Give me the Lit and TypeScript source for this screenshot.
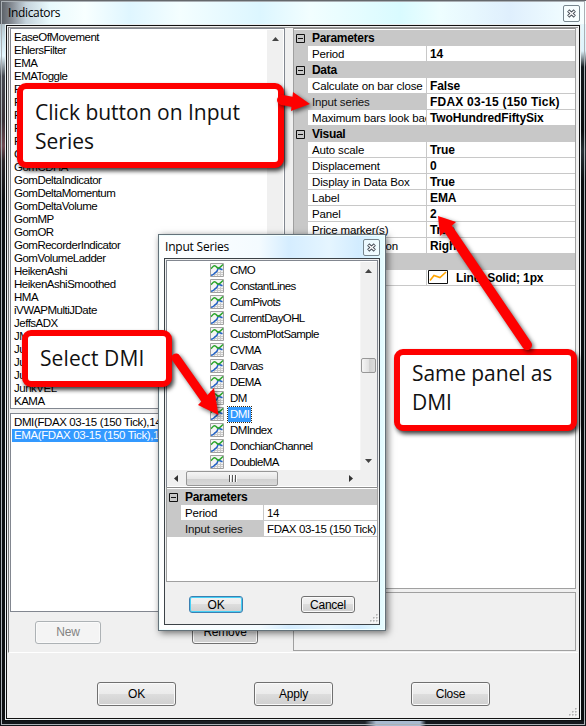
import { LitElement, html, css, svg } from "lit";
import { customElement } from "lit/decorators.js";
import { classMap } from "lit/directives/class-map.js";

const indicators = [
  "EaseOfMovement", "EhlersFilter", "EMA", "EMAToggle", "F", "F", "F", "F", "F", "G",
  "GomCDHA", "GomDeltaIndicator", "GomDeltaMomentum", "GomDeltaVolume", "GomMP", "GomOR",
  "GomRecorderIndicator", "GomVolumeLadder", "HeikenAshi", "HeikenAshiSmoothed", "HMA",
  "iVWAPMultiJDate", "JeffsADX", "JM", "Ju", "Ju", "Ju", "JunkVEL", "KAMA",
];

const studies = [
  "CMO", "ConstantLines", "CumPivots", "CurrentDayOHL", "CustomPlotSample", "CVMA", "Darvas",
  "DEMA", "DM", "DMI", "DMIndex", "DonchianChannel", "DoubleMA",
];

type Row = { head?: string; name?: string; value?: string; active?: boolean; plot?: boolean };

const settings: Row[] = [
  { head: "Parameters" },
  { name: "Period", value: "14" },
  { head: "Data" },
  { name: "Calculate on bar close", value: "False" },
  { name: "Input series", value: "FDAX 03-15 (150 Tick)", active: true },
  { name: "Maximum bars look back", value: "TwoHundredFiftySix" },
  { head: "Visual" },
  { name: "Auto scale", value: "True" },
  { name: "Displacement", value: "0" },
  { name: "Display in Data Box", value: "True" },
  { name: "Label", value: "EMA" },
  { name: "Panel", value: "2" },
  { name: "Price marker(s)", value: "True" },
  { name: "Scale justification", value: "Right" },
  { head: "Plots" },
  { name: "EMA", value: "Line; Solid; 1px", plot: true },
];

const seriesSettings: Row[] = [
  { head: "Parameters" },
  { name: "Period", value: "14" },
  { name: "Input series", value: "FDAX 03-15 (150 Tick)", active: true },
];

const shared = css`
  * { box-sizing: border-box; }
  .btn {
    display: flex; align-items: center; justify-content: center;
    border: 1px solid #707070; border-radius: 3px;
    box-shadow: inset 0 0 0 1px #fafafa;
    background: linear-gradient(#f2f2f2 0, #ebebeb 49%, #dddddd 50%, #cfcfcf 100%);
    font-size: 12px; letter-spacing: -0.25px; padding-bottom: 1px; color: #000;
  }
  .btn.off { border-color: #adb2b5; background: #f4f4f4; color: #838383; }
  .btn.focus { border-color: #3c7fb1; box-shadow: inset 0 0 0 1px #46d0f5; }
  .close {
    display: flex; align-items: center; justify-content: center;
    width: 17px; height: 17px; border: 1px solid #77868e; border-radius: 2px;
    background: rgba(250, 255, 255, 0.6);
  }
  svg { display: block; }
`;

const closeIcon = svg`<svg width="9" height="9" viewBox="0 0 9 9"><path d="M1.2 1.5 7.8 7.5M7.8 1.5 1.2 7.5" stroke="#444b55" stroke-width="3.2"/><path d="M1.6 1.9 7.4 7.1M7.4 1.9 1.6 7.1" stroke="#fff" stroke-width="1.3"/></svg>`;

const grip = html`<svg width="10" height="10" viewBox="0 0 10 10">
  ${[[7, 1], [4, 4], [7, 4], [1, 7], [4, 7], [7, 7]].map(
    ([x, y]) => svg`<rect x=${x + 1} y=${y + 1} width="1.5" height="1.5" fill="#fff"/><rect x=${x} y=${y} width="1.6" height="1.6" fill="#b4b4b4"/>`
  )}
</svg>`;

@customElement("property-grid")
class PropertyGrid extends LitElement {
  static properties = { rows: { attribute: false }, compact: { type: Boolean, reflect: true } };
  declare rows: Row[];
  declare compact: boolean;

  static styles = [shared, css`
    :host { display: block; box-sizing: border-box; background: #fff; border: 1px solid #a0a0a0; padding-top: 1px; border-top-color: #8c8c8c; overflow: hidden; --name: 118px; --gutter: 14px; }
    :host([compact]) { --name: 82px; }
    .row { display: grid; grid-template-columns: var(--gutter) var(--name) 1fr; height: 16px; font-size: 11.5px; line-height: 17px; white-space: nowrap; }
    .gutter { background: #c8c8c8; }
    .head { display: flex; align-items: center; height: 16px; background: #c8c8c8; font: bold 12px/16px "Liberation Sans", sans-serif; letter-spacing: -0.3px; }
    .head svg { margin: 0 7px 0 2px; }
    .name { border-bottom: 1px solid #c8c8c8; padding-left: 4px; overflow: hidden; letter-spacing: -0.15px; }
    .value { border-left: 1px solid #c8c8c8; border-bottom: 1px solid #c8c8c8; padding-left: 3px; font-size: 12px; font-weight: bold; letter-spacing: -0.12px; overflow: hidden; display: flex; }
    .active .value { letter-spacing: 0.22px; }
    :host([compact]) .value { font-size: 11.5px; font-weight: normal; letter-spacing: -0.38px; }
    .active .name { background: #c8c8c8; color: #111; }
    .plot .value { padding-left: 1px; gap: 8px; }
  `];

  render() {
    return this.rows.map((r) => r.head
      ? html`<div class="head">
          <svg width="9" height="9" viewBox="0 0 9 9"><path d="M.5.5h8v8h-8zM2 4.5h5" fill="none" stroke="#111"/></svg>${r.head}
        </div>`
      : html`<div class=${classMap({ row: true, active: !!r.active, plot: !!r.plot })}>
          <div class="gutter"></div>
          <div class="name">${r.name}</div>
          <div class="value">
            ${r.plot ? html`<svg width="20" height="14" viewBox="0 0 20 14"><path d="M.5.5h19v13H.5z" fill="#fff" stroke="#111"/><path d="M2 10.5 6 5.5 12 7.5 18 2" fill="none" stroke="#ffa500" stroke-width="1.6"/></svg>` : ""}<span>${r.value}</span>
          </div>
        </div>`);
  }
}

@customElement("series-dialog")
class SeriesDialog extends LitElement {
  static styles = [shared, css`
    :host {
      box-sizing: border-box;
      display: grid; grid-template-rows: 23px 1fr; padding: 0 5px 5px; border: 1px solid #64727a;
      background: linear-gradient(90deg, #fff 0, #f4fbff 100px, #d5edff 130px, #e5f5ff 170px, #d2ecff 200px, #e9ffff 228px);
      box-shadow: 2px 2px 7px rgba(0, 0, 0, 0.55), inset 0 0 0 1px #f2ffff;
    }
    .title { display: flex; justify-content: space-between; padding: 4px 0 0 1px; font: 12px/16px "Open Sans", sans-serif; }
    .title span { letter-spacing: -0.2px; }
    .client { display: flex; flex-direction: column; border: 1px solid #3c4247; background: #f0f0f0; padding: 1px 1px 0; }
    .tree { display: grid; grid-template: 209px 16px / 1fr 17px; height: 227px; background: #fff; border: 1px solid #828790; border-bottom: 0; }
    .items { padding-top: 1px; overflow: hidden; }
    .item { display: flex; align-items: center; height: 16px; padding-left: 43px; gap: 3px; font-size: 11.5px; letter-spacing: -0.6px; white-space: nowrap; }
    .item span { padding: 0 1px 0 3px; height: 15px; line-height: 15px; }
    .item.sel span { margin-left: 1px; padding: 0 2px; background: #3399ff; color: #fff; outline: 1px dotted #3a2a10; outline-offset: -0.5px; }
    .vbar { display: flex; flex-direction: column; align-items: center; background: #f0f0f0; border-left: 1px solid #f5f5f5; margin-top: 1px; padding-right: 1px; }
    .up { margin-top: 7px; }
    .vthumb { width: 15px; height: 15px; margin-top: 85px; border: 1px solid #979797; border-radius: 2px; background: linear-gradient(90deg, #f5f5f5, #e2e2e2 50%, #cfcfcf 51%, #dcdcdc); }
    .down { margin-top: auto; margin-bottom: 7px; }
    .hbar { display: flex; align-items: center; background: #f0f0f0; padding-left: 7px; }
    .hthumb { display: flex; align-items: center; justify-content: center; gap: 2px; margin-left: 8px; width: 92px; height: 15px; border: 1px solid #979797; border-radius: 2px; background: linear-gradient(#f5f5f5, #e6e6e6 50%, #cfcfcf 51%, #d9d9d9); }
    .hthumb i { width: 1px; height: 7px; background: #555; box-shadow: 1px 0 #fff; }
    .right { margin-left: 71px; }
    .corner { background: #f0f0f0; }
    property-grid { height: 95px; }
    .foot { display: grid; grid-template-columns: 54px 54px; justify-content: space-between; padding: 14px 23px 0 23px; }
    .foot .btn { height: 17px; padding-bottom: 0; }
    .grip { align-self: flex-end; margin: 0 -1px 0 0; }
  `];

  render() {
    return html`
      <div class="title"><span>Input Series</span><div class="close">${closeIcon}</div></div>
      <div class="client">
        <div class="tree">
          <div class="items">
            ${studies.map((s) => html`<div class=${classMap({ item: true, sel: s === "DMI" })}>
              <svg width="14" height="14" viewBox="0 0 14 14">
                <path d="M.5.5h13v13H.5z" fill="#f4f4f4" stroke="#a2a2a2"/>
                <path d="M4.5 9.500v3.500M7.500 8v5M10.500 7.500v5.500M6 9.500h7M4 11.500h9" stroke="#c8c8c8"/>
                <path d="M1 12.300C4 12.300 3.500 10.500 5.500 9.500 8 8.500 7 6.500 8.500 5.200L12.500 6.800" fill="none" stroke="#2060c4" stroke-width="1.500"/>
                <path d="M1 5.500C2.500 4.800 2.800 2.800 4.500 2.800 6.500 2.800 6.500 4.800 8 5.200 10 5.200 11 3 13 1.500" fill="none" stroke="#28a428" stroke-width="1.500"/>
              </svg><span>${s}</span></div>`)}
          </div>
          <div class="vbar">
            <svg class="up" width="7" height="4"><path d="M0 4 3.500 0 7 4z" fill="#444"/></svg>
            <div class="vthumb"></div>
            <svg class="down" width="7" height="4"><path d="M0 0 3.500 4 7 0z" fill="#444"/></svg>
          </div>
          <div class="hbar">
            <svg width="4" height="7"><path d="M4 0 0 3.500 4 7z" fill="#333"/></svg>
            <div class="hthumb"><i></i><i></i><i></i></div>
            <svg class="right" width="4" height="7"><path d="M0 0 4 3.500 0 7z" fill="#333"/></svg>
          </div>
          <div class="corner"></div>
        </div>
        <property-grid compact .rows=${seriesSettings}></property-grid>
        <div class="foot"><div class="btn focus">OK</div><div class="btn">Cancel</div></div>
        <div class="grip">${grip}</div>
      </div>`;
  }
}

@customElement("app-root")
class AppRoot extends LitElement {
  static styles = [shared, css`
    :host {
      display: grid; grid-template-rows: 22px 1fr; position: relative; width: 586px; height: 726px; overflow: hidden;
      box-sizing: border-box; padding: 1px 5px 6px; font-family: "Liberation Sans", sans-serif; color: #000;
      border-top: 1px solid #65686c;
      background:
        linear-gradient(90deg, #555a60 0, #888e96 12px, #c5d3dc 26px, #e9fafd 50px, #f8ffff 85px, #dff6ff 130px, #f4feff 180px, #dcf6ff 260px, #f2feff 310px, #d9fbff 400px, #eefeff 440px, #dfeffd 510px, #edfaff 555px, #f8ffff) 0 0 / 100% 23px no-repeat,
        linear-gradient(90deg, #101418 0, #20252b 365px, #a9b9cf 376px, #a9b9cf 420px, #14181d 426px) 0 100% / 100% 5px no-repeat,
        linear-gradient(#8b9299 0, #cfe6ee 40px, #e5f8ff 55px, #454950 75px, #393237 120px, #6f4a52 145px, #2a2528 160px, #0d0f11 200px, #0d0f11) 0 0 / 8px 100% no-repeat,
        linear-gradient(#eafcff 0, #dff2fa 50px, #11171b 66px, #090d0f 130px, #273035 150px, #090d0f 180px) 100% 0 / 8px 100% no-repeat,
        #0d0f11;
    }
    .rim { position: absolute; inset: 0 1px 1px 1px; border: 1px solid #aab0b5; pointer-events: none; }
    .title { display: flex; justify-content: space-between; align-items: flex-start; padding: 3px 0 0 3px; font: 12px/16px "Open Sans", sans-serif; letter-spacing: -0.35px; }
    .title .close { margin-right: 1px; }
    .client { display: flex; flex-direction: column; border: 1px solid #e8eef0; outline: 1px solid #111; outline-offset: -2px; padding: 2px; background: #f0f0f0; background-clip: padding-box; }
    .panes { display: grid; grid-template-columns: 275px 283px; column-gap: 8px; height: 626px; padding: 0 0 0 1px; border-left: 1px solid #777; border-top: 1px solid #999; border-bottom: 1px solid #fff; }
    .left { display: flex; flex-direction: column; }
    .list { background: #fff; border: 1px solid #828790; font-size: 11.5px; line-height: 13px; letter-spacing: -0.5px; white-space: nowrap; overflow: hidden; }
    .all { display: grid; grid-template-columns: 1fr 17px; height: 381px; }
    .names { padding: 2px 0 0 3px; }
    .bar { background: #f0f0f0; margin: 1px 1px 1px 0; display: flex; justify-content: center; padding-top: 7px; }
    .picked { height: 199px; margin-top: 4px; padding: 2px 1px; letter-spacing: -0.38px; }
    .picked div { padding-left: 2px; }
    .picked .sel { background: #3399ff; color: #fff; }
    .actions { display: grid; grid-template-columns: 66px 66px; column-gap: 91px; padding: 9px 0 0 25px; }
    .actions .btn { height: 23px; }
    .right { display: flex; flex-direction: column; gap: 3px; }
    .right property-grid { height: 561px; }
    .note { height: 59px; border: 1px solid #a0a0a0; }
    .foot { display: grid; grid-template-columns: repeat(3, 79px); column-gap: 78px; padding: 29px 0 0 89px; }
    .foot .btn { height: 24px; }
    .grip { align-self: flex-end; margin-top: auto; }
    series-dialog { position: absolute; left: 158px; top: 233px; width: 228px; height: 397px; }
    .callout {
      position: absolute; border: 6px solid #fe0000; border-radius: 9px; background: #fff; color: #111;
      font: 21px/29px "Open Sans", sans-serif; box-shadow: 2px 3px 4px rgba(0, 0, 0, 0.75);
    }
    .click { left: 17px; top: 82px; width: 267px; height: 85px; padding: 9px 12px; letter-spacing: 0; }
    .select { left: 22px; top: 329px; width: 150px; height: 57px; padding: 8px 12px; letter-spacing: 0.1px; }
    .same { left: 394px; top: 348px; width: 183px; height: 82px; padding: 4px 12px; letter-spacing: -0.1px; }
    .arrows { position: absolute; inset: 0; filter: drop-shadow(2px 2px 2px rgba(0, 0, 0, 0.6)); }
  `];

  render() {
    return html`
      <div class="rim"></div>
      <div class="title"><span>Indicators</span><div class="close">${closeIcon}</div></div>
      <div class="client">
        <div class="panes">
          <div class="left">
            <div class="list all">
              <div class="names">${indicators.map((n) => html`<div>${n}</div>`)}</div>
              <div class="bar"><svg width="7" height="4"><path d="M0 4 3.500 0 7 4z" fill="#444"/></svg></div>
            </div>
            <div class="list picked">
              <div>DMI(FDAX 03-15 (150 Tick),14)</div>
              <div class="sel">EMA(FDAX 03-15 (150 Tick),14)</div>
            </div>
            <div class="actions"><div class="btn off">New</div><div class="btn">Remove</div></div>
          </div>
          <div class="right">
            <property-grid .rows=${settings}></property-grid>
            <div class="note"></div>
          </div>
        </div>
        <div class="foot"><div class="btn">OK</div><div class="btn">Apply</div><div class="btn">Close</div></div>
        <div class="grip">${grip}</div>
      </div>
      <series-dialog></series-dialog>
      <div class="callout click">Click button on Input<br>Series</div>
      <div class="callout select">Select DMI</div>
      <div class="callout same">Same panel as<br>DMI</div>
      <svg class="arrows" width="586" height="726" viewBox="0 0 586 726" fill="#fe0000" stroke="#fe0000" stroke-linecap="round">
        <path d="M282 99 296 101.500" stroke-width="10"/><path d="M293 91 310 103 291 110z" stroke="none"/>
        <path d="M176 357 207 401" stroke-width="9"/><path d="M214 387 218.500 414 198 404z" stroke="none"/>
        <path d="M527 344 449 229" stroke-width="10"/><path d="M438 215 456 221 440 235z" stroke="none"/>
      </svg>`;
  }
}
